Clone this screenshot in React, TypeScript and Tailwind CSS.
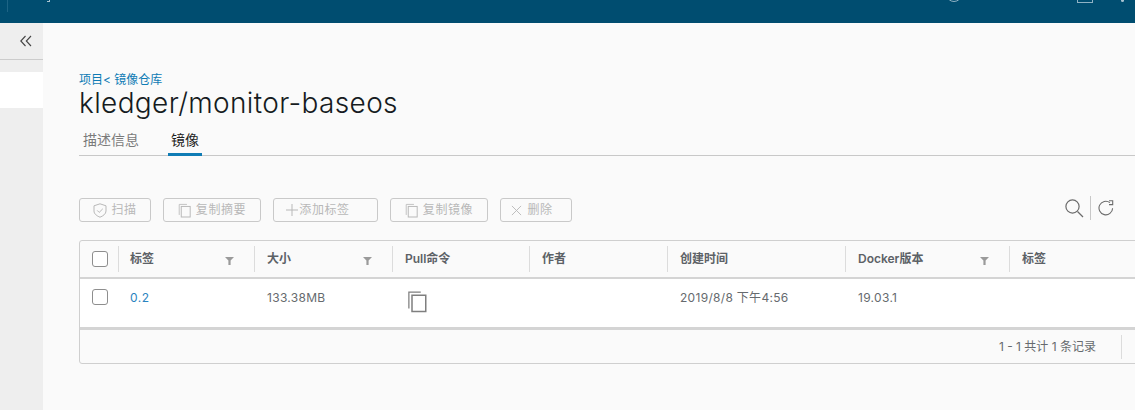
import React from "react";

const FONT = "font-['Inter','Noto_Sans_CJK_SC',sans-serif]";

function CopyIcon({ className }: { className: string }) {
  return (
    <svg viewBox="0 0 16 18" className={className} fill="none" stroke="currentColor">
      <path d="M1.5 14.5V1.5H11" strokeWidth="1" />
      <rect x="4" y="4" width="11" height="13" strokeWidth="1.2" />
    </svg>
  );
}

function Filter({ className = "" }: { className?: string }) {
  return (
    <svg viewBox="0 0 9 9" className={`w-[9px] h-[9px] text-[#9a9a9a] ${className}`} fill="currentColor">
      <path d="M0 1h9L5.6 4.6V9H3.4V4.6z" />
    </svg>
  );
}

function Btn({ w, gap, icon, label }: { w: string; gap: string; icon: React.ReactNode; label: string }) {
  return (
    <div className={`${w} ${gap} h-6 flex items-center justify-center border border-[#c9c9c9] rounded-[3px] text-[12px] text-[#b8b8b8] tracking-[0.6px]`}>
      {icon}
      <span>{label}</span>
    </div>
  );
}

function Check() {
  return <div className="w-4 h-4 border border-[#8e8e8e] rounded-[3px] bg-white" />;
}

function Head({ w, label, filter, pl = "pl-3" }: { w: string; label: string; filter?: boolean; pl?: string }) {
  return (
    <div className={`${w} shrink-0 h-[26px] flex items-center justify-between ${pl} pr-5 border-l border-[#dcdcdc]`}>
      <span className="text-[12px] font-semibold text-[#5c6166] leading-none">{label}</span>
      {filter && <Filter className="mt-[3px]" />}
    </div>
  );
}

function Cell({ w, children, className = "text-[#666a6e] pl-[13px] pt-[10px] tracking-[0.3px]" }: { w: string; children?: React.ReactNode; className?: string }) {
  return <div className={`${w} shrink-0 text-[12px] ${className}`}>{children}</div>;
}

export default function App() {
  return (
    <div className={`w-[1135px] h-[410px] overflow-hidden flex flex-col bg-[#fafafa] ${FONT}`}>
      <header className="h-[23px] shrink-0 bg-[#004d70] flex items-start overflow-hidden">
        <div className="ml-[7px] w-px h-3 bg-[#1d6485]" />
        <div className="ml-[39px] mt-[-2px] w-[3px] h-1 border-b border-r border-[#a9c3d0]" />
        <div className="ml-auto mt-[-14px] w-4 h-4 rounded-full border border-[#8fb2c4]" />
        <div className="ml-[115px] mt-[-13px] w-4 h-4 border border-[#8fb2c4]" />
        <div className="ml-[28px] mt-[-1px] mr-[11px] w-[3px] h-[3px] rounded-full bg-[#a9c3d0]" />
      </header>
      <div className="flex flex-1 min-h-0">
        <aside className="w-[43px] shrink-0 bg-[#eeeeee] flex flex-col">
          <div className="h-[37px] border-b border-[#cccccc] flex items-center justify-end pr-[11px] text-[#444]">
            <svg viewBox="0 0 12 12" className="w-3 h-3" fill="none" stroke="currentColor" strokeWidth="1.1">
              <path d="M5.5 1 0.8 6l4.7 5M11 1 6.3 6l4.7 5" />
            </svg>
          </div>
          <div className="h-9 bg-white mt-3" />
        </aside>
        <main className="flex-1 min-w-0 pl-9 pt-[50px]">
          <div className="text-[12px] leading-[14px] text-[#0f7cb5] h-[14px]">项目&lt; 镜像仓库</div>
          <h1 className="text-[28px] leading-[36px] text-[#151b21] font-light tracking-[0.36px] h-[36px] -mt-[2px]">kledger/monitor-baseos</h1>
          <div className="mt-[5px] h-[30px] flex border-b border-[#c8c8c8] w-[1056px]">
            <div className="w-[89px] pl-1 pt-[3px] text-[14px] text-[#7a7a7a]">描述信息</div>
            <div className="w-[34px] h-[30px] border-b-[3px] border-[#0f7cb5] text-center pt-[3px] text-[14px] text-[#222]">镜像</div>
          </div>
          <div className="mt-[42px] h-6 flex items-center w-[1056px]">
            <div className="flex gap-3">
              <Btn
                w="w-[72px]"
                gap="gap-1"
                label="扫描"
                icon={
                  <svg viewBox="0 0 14 15" className="w-[14px] h-[15px]" fill="none" stroke="currentColor">
                    <path d="M7 .8 13 2.8V8c0 3-3 5-6 6.2C4 13 1 11 1 8V2.8z" />
                    <path d="m4.2 7.4 2 2 3.6-3.6" />
                  </svg>
                }
              />
              <Btn w="w-[98px]" gap="gap-[5px]" label="复制摘要" icon={<CopyIcon className="w-[13px] h-[15px]" />} />
              <Btn
                w="w-[105px] pr-4"
                gap="gap-0"
                label="添加标签"
                icon={
                  <svg viewBox="0 0 14 14" className="w-[14px] h-[14px]" fill="none" stroke="currentColor">
                    <path d="M7 1v12M1 7h12" />
                  </svg>
                }
              />
              <Btn w="w-[98px]" gap="gap-[5px]" label="复制镜像" icon={<CopyIcon className="w-[13px] h-[15px]" />} />
              <Btn
                w="w-[72px] pr-[8px]"
                gap="gap-[5px]"
                label="删除"
                icon={
                  <svg viewBox="0 0 12 12" className="w-[11px] h-[11px]" fill="none" stroke="currentColor">
                    <path d="m1 1 10 10M11 1 1 11" />
                  </svg>
                }
              />
            </div>
            <div className="ml-auto mr-[21px] flex items-center text-[#6b6b6b] -mt-[4px]">
              <svg viewBox="0 0 19 19" className="w-[19px] h-[19px]" fill="none" stroke="currentColor" strokeWidth="1.2">
                <circle cx="7.5" cy="7.5" r="6.6" />
                <path d="m12.5 12.5 5.5 5.5" />
              </svg>
              <div className="w-px h-6 bg-[#c8c8c8] ml-[6px] mr-[7px]" />
              <svg viewBox="0 0 16 16" className="w-4 h-4" fill="none" stroke="currentColor" strokeWidth="1.1">
                <path d="M14.6 8.2A6.8 6.8 0 1 1 11.9 2.6" />
                <path d="M11 .8h3.7v3.8H11" />
              </svg>
            </div>
          </div>
          <div className="mt-[18px] w-[1100px] h-[124px] border border-[#cfcfcf] rounded-[3px] flex flex-col">
            <div className="h-[38px] shrink-0 flex items-center border-b-2 border-[#d4d4d4] pb-[1px]">
              <div className="w-[38px] shrink-0 pl-3"><Check /></div>
              <Head w="w-[136px]" label="标签" filter pl="pl-[11px]" />
              <Head w="w-[138px]" label="大小" filter />
              <Head w="w-[137px]" label="Pull命令" />
              <Head w="w-[138px]" label="作者" />
              <Head w="w-[178px]" label="创建时间" />
              <Head w="w-[164px]" label="Docker版本" filter />
              <Head w="w-[120px]" label="标签" />
            </div>
            <div className="h-[51px] shrink-0 flex bg-white border-b-[3px] border-[#d4d4d4]">
              <div className="w-[38px] shrink-0 pl-3 pt-[10px]"><Check /></div>
              <Cell w="w-[136px]" className="text-[#2a84c0] pl-3 pt-[10px] tracking-[0.5px]">0.2</Cell>
              <Cell w="w-[138px]">133.38MB</Cell>
              <Cell w="w-[137px]" className="pt-[11px] pl-[15px]">
                <CopyIcon className="w-[20px] h-[23px] text-[#7f7f7f]" />
              </Cell>
              <Cell w="w-[138px]" />
              <Cell w="w-[178px]">2019/8/8 下午4:56</Cell>
              <Cell w="w-[164px]">19.03.1</Cell>
            </div>
            <div className="flex-1 flex items-center justify-end pr-[56px]">
              <span className="text-[12px] text-[#666a6e]">1 - 1 共计 1 条记录</span>
              <div className="ml-[25px] w-px h-6 bg-[#dcdcdc]" />
            </div>
          </div>
        </main>
      </div>
    </div>
  );
}
